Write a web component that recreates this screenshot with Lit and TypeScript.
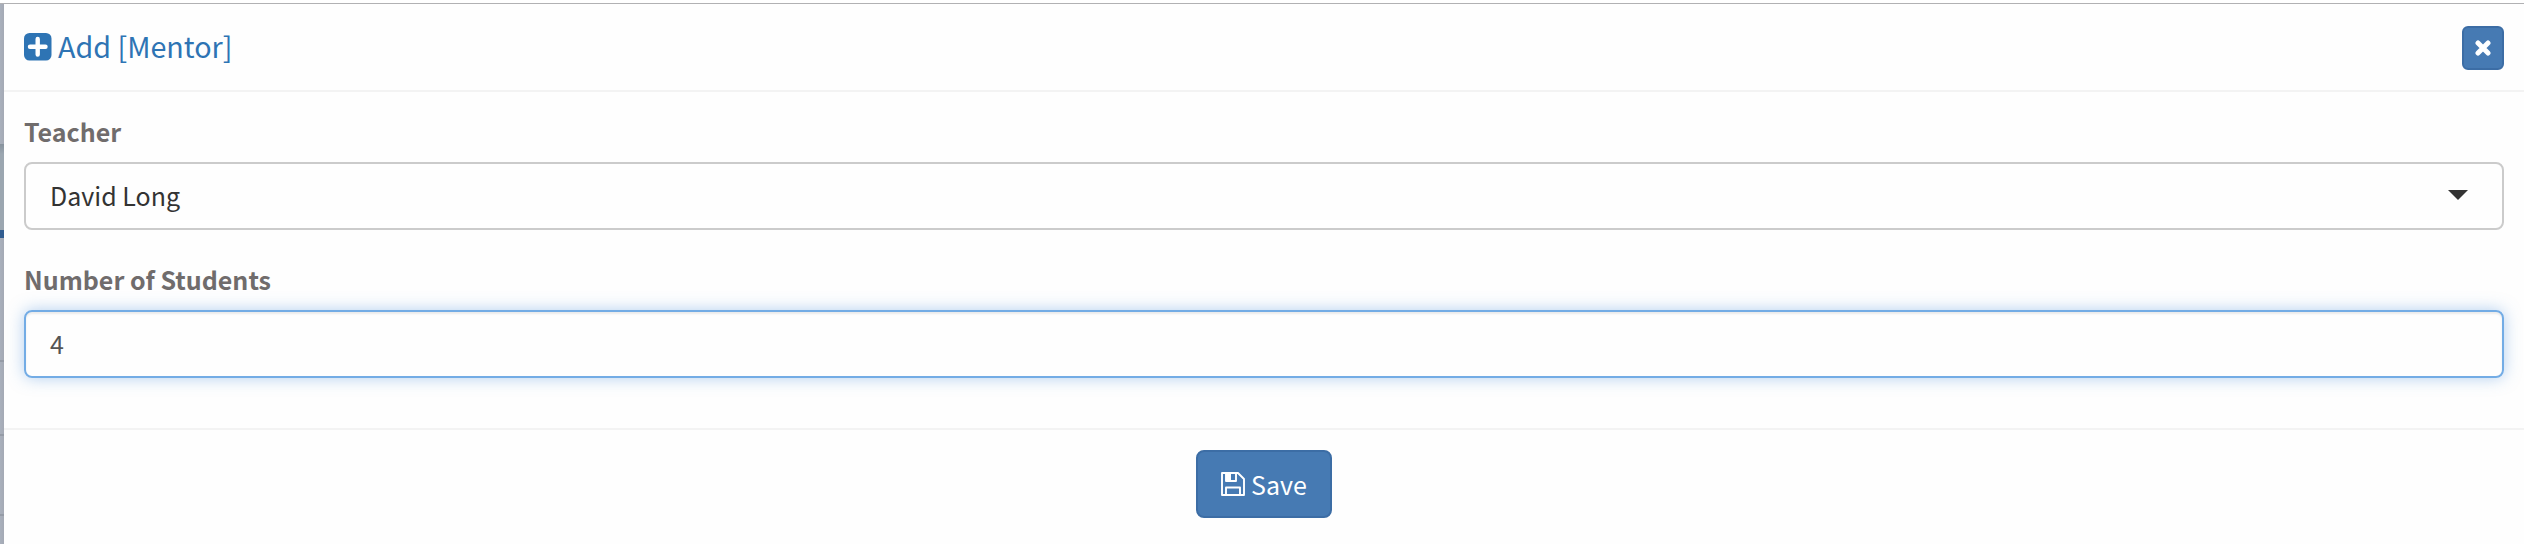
import { LitElement, html, css } from "lit";
import { customElement } from "lit/decorators.js";

@customElement("app-root")
export class AppRoot extends LitElement {
  static styles = css`
    :host {
      display: flow-root;
      height: 544px;
      overflow: hidden;
      background: #fff;
      font-family: "Noto Sans CJK SC", "Noto Sans", sans-serif;
      font-size: 25px;
    }
    * { box-sizing: border-box; }
    .screen {
      height: 541px;
      margin-top: 3px;
      border-top: 1px solid #b1b1b3;
      display: flex;
    }
    .page { width: 4px; flex: none; display: flex; flex-direction: column; background: linear-gradient(90deg, #a9b0bc, #a4a9b4); }
    .top { height: 140px; }
    .band { height: 86px; background: linear-gradient(#87929d, #9ba6b0 10px, #9ba6b0); }
    .accent { height: 8px; background: #315d90; }
    .row { border-bottom: 2px solid #959ba6; }
    .modal { flex: 1; min-width: 0; background: #fefefe; display: flex; flex-direction: column; }
    .header {
      height: 88px;
      flex: none;
      padding: 0 20px;
      border-bottom: 2px solid #f3f3f3;
      display: flex;
      justify-content: space-between;
      align-items: center;
    }
    .title { display: flex; align-items: center; color: #2e74b4; font-size: 28.7px; line-height: 40px; }
    .title svg { width: 28px; height: 28px; margin-right: 6px; }
    .title span { padding-bottom: 3px; }
    .btn { background: #467ab3; border: 2px solid #3c6da5; color: #fff; display: flex; align-items: center; justify-content: center; font: inherit; padding: 0; }
    .close { width: 42px; height: 44px; border-radius: 6px; margin-top: 2px; }
    .close svg { width: 16px; height: 16px; display: block; }
    .body { padding: 20px 20px 0; height: 336px; flex: none; }
    .label { height: 50px; line-height: 38px; color: #706c6c; font-weight: 700; }
    .field {
      height: 68px;
      border: 2px solid #cbcbcb;
      border-radius: 8px;
      padding: 0 34px 0 24px;
      margin-bottom: 30px;
      display: flex;
      align-items: center;
      justify-content: space-between;
      color: #333;
      line-height: 40px;
    }
    .field span { padding-bottom: 2px; }
    .caret { width: 20px; height: 10px; margin-top: -2px; display: block; }
    .focused {
      border-color: #73ace5;
      color: #555;
      box-shadow: inset 0 2px 2px rgba(0, 0, 0, 0.075), 0 0 16px rgba(102, 160, 225, 0.5);
    }
    .footer { border-top: 2px solid #f3f3f3; padding-top: 20px; flex: 1; display: flex; justify-content: center; align-items: flex-start; }
    .save { width: 136px; height: 68px; border-radius: 8px; line-height: 40px; }
    .save svg { width: 24px; height: 24px; margin-right: 6px; }
    .save span { padding-bottom: 1px; }
    .r1 { height: 124px; }
    .r2 { height: 74px; }
    .r3 { height: 80px; }
  `;

  render() {
    return html`
      <div class="screen">
        <div class="page">
          <div class="top"></div>
          <div class="band"></div>
          <div class="accent"></div>
          <div class="row r1"></div>
          <div class="row r2"></div>
          <div class="row r3"></div>
        </div>
        <div class="modal">
          <div class="header">
            <div class="title">
              <svg viewBox="0 0 28 28"><rect width="27.5" height="27.5" rx="5.5" fill="#2e74b4"/><path d="M13.7 6v15.5M6 13.7h15.5" stroke="#fff" stroke-width="4.4" stroke-linecap="round"/></svg>
              <span>Add [Mentor]</span>
            </div>
            <button class="btn close" aria-label="Close">
              <svg viewBox="0 0 16 16"><path d="M3 3l10 10M13 3L3 13" stroke="#fff" stroke-width="5" stroke-linecap="round"/></svg>
            </button>
          </div>
          <div class="body">
            <div class="label">Teacher</div>
            <div class="field"><span>David Long</span>
              <svg class="caret" viewBox="0 0 20 10"><path d="M0 0h20L10 10z" fill="#333"/></svg>
            </div>
            <div class="label">Number of Students</div>
            <div class="field focused"><span>4</span></div>
          </div>
          <div class="footer">
            <button class="btn save">
              <svg viewBox="0 0 24 24" fill="none" stroke="#fff" stroke-width="1.9" stroke-linejoin="round"><path d="M1 1h16l6 6v16H1z"/><path d="M5 23v-7.500h14V23M5 1v8h10V1"/><path d="M5 1h5v8H5z" fill="#fff" stroke="none"/></svg>
              <span>Save</span>
            </button>
          </div>
        </div>
      </div>
    `;
  }
}
